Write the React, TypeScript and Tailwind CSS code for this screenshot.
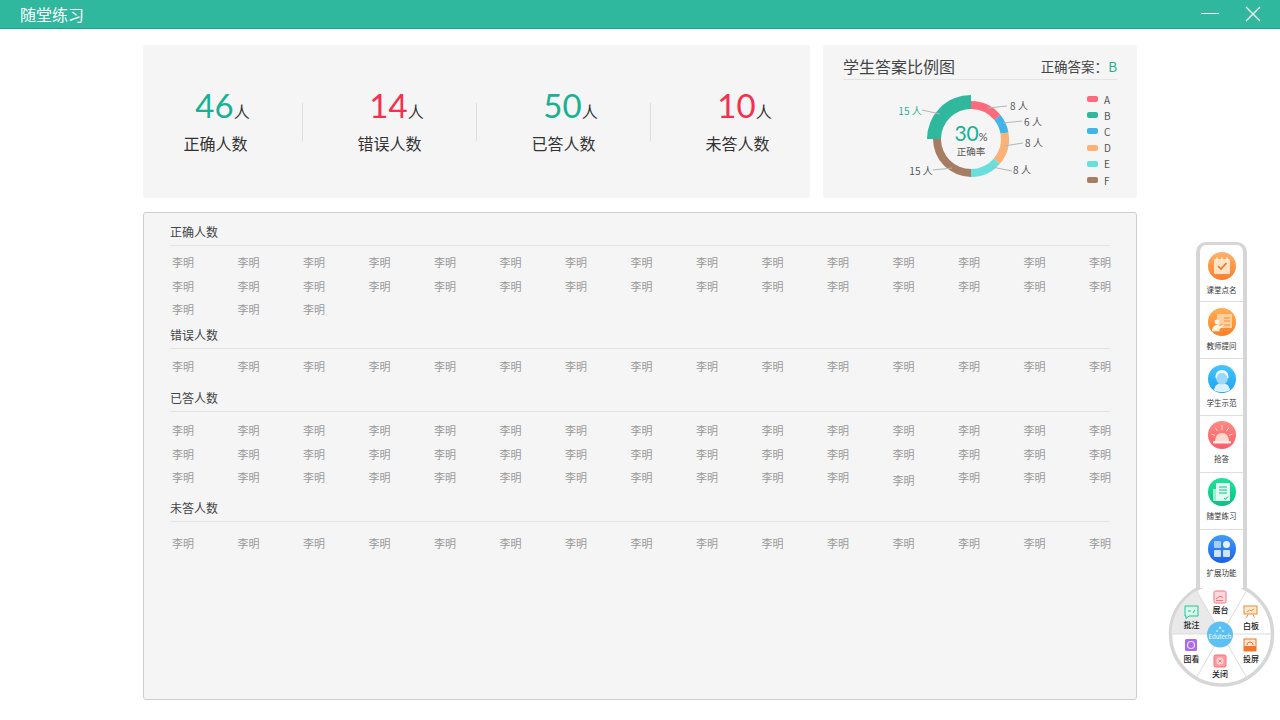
import React from 'react';

const cjk = 'font-["Noto_Sans_CJK_SC","Noto_Sans",sans-serif]';

type Stat = { value: number; label: string; color: string };

const stats: Stat[] = [
  { value: 46, label: '正确人数', color: 'text-[#17b193]' },
  { value: 14, label: '错误人数', color: 'text-[#f5304f]' },
  { value: 50, label: '已答人数', color: 'text-[#17b193]' },
  { value: 10, label: '未答人数', color: 'text-[#f5304f]' },
];

const legend = [
  { name: 'A', color: 'bg-[#fb6b7c]' },
  { name: 'B', color: 'bg-[#2fb89d]' },
  { name: 'C', color: 'bg-[#42b4e8]' },
  { name: 'D', color: 'bg-[#fbb274]' },
  { name: 'E', color: 'bg-[#66dfdd]' },
  { name: 'F', color: 'bg-[#a67c62]' },
];

// donut slice between two radii, angles in degrees clockwise from 12 o'clock
function slice(cx: number, cy: number, r0: number, r1: number, a0: number, a1: number) {
  const pt = (r: number, a: number) => {
    const t = (a * Math.PI) / 180;
    return `${cx + r * Math.sin(t)} ${cy - r * Math.cos(t)}`;
  };
  const large = a1 - a0 > 180 ? 1 : 0;
  return `M${pt(r1, a0)} A${r1} ${r1} 0 ${large} 1 ${pt(r1, a1)} L${pt(r0, a1)} A${r0} ${r0} 0 ${large} 0 ${pt(r0, a0)} Z`;
}

const Donut = () => {
  const cx = 971;
  const cy = 139;
  const labels = [
    { t: '8 人', x: 1019, y: 106, line: '988,108 1007,106', c: '#555' },
    { t: '6 人', x: 1033, y: 122, line: '1003,123 1022,121', c: '#555' },
    { t: '8 人', x: 1034, y: 143, line: '1004,146 1023,143', c: '#555' },
    { t: '8 人', x: 1022, y: 170, line: '992,167 1012,171', c: '#555' },
    { t: '15 人', x: 910, y: 111, line: '922,110 940,114', c: '#1cb394' },
    { t: '15 人', x: 921, y: 171, line: '933,170 952,168', c: '#555' },
  ];
  return (
    <svg width="170" height="105" viewBox="890 85 170 105" className="ml-[47px] mt-[5px] shrink-0">
      <path d={slice(cx, cy, 30, 38, 0, 51)} fill="#fb6b7c" />
      <path d={slice(cx, cy, 30, 38, 51, 80)} fill="#42b4e8" />
      <path d={slice(cx, cy, 30, 38, 80, 131)} fill="#fbb274" />
      <path d={slice(cx, cy, 30, 38, 131, 180)} fill="#66dfdd" />
      <path d={slice(cx, cy, 30, 38, 180, 270)} fill="#a67c62" />
      <path d={slice(cx, cy, 30, 44, 270, 360)} fill="#2fb89d" />
      {labels.map((l) => (
        <g key={l.t + l.x}>
          <polyline points={l.line} fill="none" stroke="#b5b5b5" strokeWidth="1" />
          <text x={l.x} y={l.y + 3.5} textAnchor="middle" fontSize="10" fill={l.c}>
            {l.t}
          </text>
        </g>
      ))}
      <text x={cx} y={140.500} textAnchor="middle" fill="#17b193" fontSize="21" fontFamily="Lato, sans-serif">
        30<tspan fontSize="11" fill="#555">%</tspan>
      </text>
      <text x={cx} y={154.500} textAnchor="middle" fill="#555" fontSize="9.5">
        正确率
      </text>
    </svg>
  );
};

const NameGrid = ({ count, odd, top }: { count: number; odd?: number; top: string }) => (
  <div className={`grid grid-cols-[repeat(15,65.5px)] auto-rows-[23.5px] pl-[2px] ${top}`}>
    {Array.from({ length: count }).map((_, i) => (
      <span key={i} className={`text-[11px] leading-[23.5px] text-[#9a9a9a] ${i === odd ? 'mt-[3px]' : ''}`}>
        李明
      </span>
    ))}
  </div>
);

type SectionProps = { title: string; count: number; odd?: number; className: string; top: string };

const Section = ({ title, count, odd, className, top }: SectionProps) => (
  <div className={className}>
    <div className="h-[22px] border-b border-[#e3e3e3] text-[12px] leading-[15px] text-[#444]">{title}</div>
    <NameGrid count={count} odd={odd} top={top} />
  </div>
);

const railIcons = {
  roll: (
    <>
      <rect x="6" y="7" width="16" height="15" rx="1" fill="#ffe3c4" />
      <path d="M9 5.500v3M14 5.500v3M19 5.500v3" stroke="#fff" strokeWidth="1.200" />
      <path d="M10 14l3 3 5.500-6" fill="none" stroke="#f0762a" strokeWidth="1.700" />
    </>
  ),
  ask: (
    <>
      <rect x="9" y="6" width="15" height="14" fill="#ffcf9e" />
      <path d="M16 10h6M16 13h6M12 17h10" stroke="#f48a33" strokeWidth="1" />
      <circle cx="9" cy="14" r="2.400" fill="#fff4e2" />
      <path d="M4 23c0-3 2-6 5-6 1.500 0 2.500.6 3 1.500l4-2.500.5.8-5 4.500v2H4z" fill="#fff4e2" />
    </>
  ),
  demo: (
    <>
      <path d="M6 25c1-5 4-7 8-7s7 2 8 7c-2 2.800-14 2.800-16 0z" fill="#d8f2ff" />
      <ellipse cx="14" cy="12.500" rx="6" ry="7" fill="#9ad9fb" />
      <path d="M7.500 13c-.5-5 2.500-8 6.500-8s7 3 6.500 8l-1.500 0c0-3-2-5-5-5s-5 2-5 5z" fill="#e8f8ff" />
    </>
  ),
  race: (
    <>
      <path d="M7 21c0-6 3-9 7-9s7 3 7 9z" fill="#ffd9cf" />
      <rect x="5" y="20" width="18" height="2.500" rx="1" fill="#fff0ea" />
      <path d="M14 4v5M7 6.500l2.500 3.500M21 6.500l-2.500 3.500M3.500 13l3.500 1.500M24.500 13l-3.500 1.500" stroke="#ffd9cf" strokeWidth="1" />
    </>
  ),
  practice: (
    <>
      <rect x="5" y="11" width="4" height="12" fill="#9df0cf" />
      <rect x="8" y="5" width="14" height="18" fill="#dffaf0" />
      <path d="M11 9h8M11 12h8M11 15h8" stroke="#12c088" strokeWidth="1.200" />
      <path d="M16 20l1.500 1.300L20 18.500" fill="none" stroke="#12c088" strokeWidth="1" />
    </>
  ),
  more: (
    <>
      <rect x="6" y="6" width="7" height="7" rx="1" fill="#a9cdfb" />
      <rect x="15" y="6" width="7" height="7" rx="3.500" fill="#e6f1ff" />
      <rect x="6" y="15" width="7" height="7" rx="1" fill="#cfe3ff" />
      <rect x="15" y="15" width="7" height="7" rx="1" fill="#cfe3ff" />
    </>
  ),
};

const railItems = [
  { key: 'roll', label: '课堂点名', box: 'h-[57px] pt-[7px] border-b', from: '#ffb36b', to: '#fb7d2c', art: railIcons.roll },
  { key: 'ask', label: '教师提问', box: 'h-[57px] pt-[6px] border-b', from: '#ffb057', to: '#fb7f26', art: railIcons.ask },
  { key: 'demo', label: '学生示范', box: 'h-[57px] pt-[6px] border-b', from: '#45c6fb', to: '#1e9ff0', art: railIcons.demo },
  { key: 'race', label: '抢答', box: 'h-[57px] pt-[5px] border-b', from: '#ff8a80', to: '#fb5c6c', art: railIcons.race },
  { key: 'practice', label: '随堂练习', box: 'h-[57px] pt-[5px] border-b', from: '#1fe39a', to: '#0bbf83', art: railIcons.practice },
  { key: 'more', label: '扩展功能', box: 'h-[57px] pt-[5px]', from: '#3f9bfb', to: '#1c62e4', art: railIcons.more },
];

const Rail = () => (
  <div className="absolute left-[1196px] top-[242px] z-10 h-[346px] w-[51px] rounded-t-[10px] border-x-4 border-t-[3px] border-[#d6d6d6] bg-white">
    {railItems.map((item) => (
      <div key={item.key} className={`flex flex-col items-center border-[#dedede] ${item.box}`}>
        <svg width="28" height="28" viewBox="0 0 28 28" className="shrink-0">
          <defs>
            <linearGradient id={`rail-${item.key}`} x1="0" y1="0" x2="0" y2="1">
              <stop offset="0" stopColor={item.from} />
              <stop offset="1" stopColor={item.to} />
            </linearGradient>
            <clipPath id={`clip-${item.key}`}>
              <circle cx="14" cy="14" r="14" />
            </clipPath>
          </defs>
          <circle cx="14" cy="14" r="14" fill={`url(#rail-${item.key})`} />
          <g clipPath={`url(#clip-${item.key})`}>{item.art}</g>
        </svg>
        <span className="mt-[5px] whitespace-nowrap text-[7.500px] leading-[10px] text-[#333]">{item.label}</span>
      </div>
    ))}
  </div>
);

const Dial = () => {
  const cx = 1221.5;
  const cy = 634;
  const r = 51;
  const spokes = [30, 90, 150, 210, 270, 330];
  return (
    <svg width="108" height="108" viewBox="1168 580 108 108" className="absolute left-[1168px] top-[580px]">
      <circle cx={cx} cy={cy} r={r} fill="#fff" stroke="#d6d6d6" strokeWidth="3.5" />
      <path d={`M${cx} ${cy} L${cx - r + 1} ${cy} A${r - 1} ${r - 1} 0 0 1 ${cx - (r - 1) * 0.5} ${cy - (r - 1) * 0.866} Z`} fill="#e9e9e9" />
      {spokes.map((a) => {
        const t = (a * Math.PI) / 180;
        return (
          <line
            key={a}
            x1={cx}
            y1={cy}
            x2={cx + (r - 1) * Math.sin(t)}
            y2={cy - (r - 1) * Math.cos(t)}
            stroke="#dcdcdc"
            strokeWidth="1"
          />
        );
      })}

      {/* 展台 */}
      <rect x="1214" y="591" width="12" height="12" rx="1.500" fill="#ffd9dc" stroke="#f4727f" />
      <path d="M1216 599l4-3 3 1.500M1216 600.500h7" fill="none" stroke="#f4727f" strokeWidth="1" />
      {/* 白板 */}
      <rect x="1244" y="606" width="13" height="8" fill="#ffe9d2" stroke="#f0892f" />
      <path d="M1247 612l2.500-2 2 1 2.500-2.500M1248 614.500l-1.500 3M1253 614.500l1.500 3" fill="none" stroke="#f0892f" strokeWidth="1" />
      {/* 投屏 */}
      <rect x="1244" y="639" width="12" height="12" fill="#ffe6cf" stroke="#f0782a" />
      <rect x="1244" y="646" width="12" height="5" fill="#f0782a" />
      <path d="M1247 645a3 3 0 0 1 6 0" fill="none" stroke="#f0782a" strokeWidth="1" />
      {/* 关闭 */}
      <rect x="1214" y="655" width="12" height="12" rx="1.500" fill="#ff9a9f" stroke="#f6737c" />
      <circle cx="1220" cy="661" r="3.500" fill="#ffd9da" />
      <path d="M1218.500 659.500l3 3M1221.500 659.500l-3 3" stroke="#f6737c" strokeWidth="1" />
      {/* 图看 */}
      <rect x="1185" y="639" width="12" height="12" rx="1.500" fill="#a86bf0" />
      <circle cx="1191" cy="645" r="3.500" fill="none" stroke="#ecdcff" strokeWidth="1.200" />
      {/* 批注 */}
      <path d="M1185 606h13v10h-9l-3 2.500V616h-1z" fill="#d6f8ec" stroke="#1fc795" />
      <path d="M1188 611h3M1193 613l2-3" stroke="#1fc795" strokeWidth="1" />

      <g fontSize="8" fill="#222" textAnchor="middle" fontWeight="500">
        <text x="1220.500" y="613">展台</text>
        <text x="1251" y="628.500">白板</text>
        <text x="1251" y="661.500">投屏</text>
        <text x="1220" y="677">关闭</text>
        <text x="1191.500" y="661.500">图看</text>
        <text x="1191.500" y="628">批注</text>
      </g>

      <circle cx="1220" cy="634.500" r="13" fill="#5cc0f2" />
      <path d="M1220 626.500l1.500 2h-3zM1217 630l1.300 1.500h-2.600zM1223 630l1.300 1.500h-2.600z" fill="#fff" />
      <text x="1220" y="639" textAnchor="middle" fontSize="6" fill="#fff">
        Edutech
      </text>
    </svg>
  );
};

export default function App() {
  return (
    <div className={`relative h-[720px] w-[1280px] overflow-hidden bg-white ${cjk}`}>
      {/* title bar */}
      <div className="flex h-[29px] items-center justify-between border-b border-[#11a98a] bg-[#2fb89d] pl-[20px] pr-[19px]">
        <span className="text-[16px] leading-[29px] text-white">随堂练习</span>
        <div className="flex items-center gap-[26px]">
          <svg width="18" height="16" viewBox="0 0 18 16">
            <path d="M0 7.500h18" stroke="#fff" strokeWidth="1" />
          </svg>
          <svg width="16" height="16" viewBox="0 0 16 16">
            <path d="M1 1l14 14M15 1L1 15" stroke="#fff" strokeWidth="1.300" />
          </svg>
        </div>
      </div>

      <div className="ml-[143px] w-[994px] pt-[16px]">
        <div className="flex gap-[13px]">
          <div className="flex h-[153px] w-[667px] items-center justify-center rounded-[3px] bg-[#f5f5f5]">
            {stats.map((s, i) => (
              <React.Fragment key={s.label}>
                {i > 0 && <div className="h-[38px] w-px shrink-0 bg-[#dedede]" />}
                <div className="flex w-[173px] shrink-0 flex-col items-center pb-[5px]">
                  <div className="ml-[14px] flex h-[44px] items-baseline">
                    <span className={`font-["Lato",sans-serif] text-[33px] leading-[44px] ${s.color}`}>{s.value}</span>
                    <span className="text-[16px] text-[#333]">人</span>
                  </div>
                  <span className="mt-[4px] text-[16px] leading-[24px] text-[#333]">{s.label}</span>
                </div>
              </React.Fragment>
            ))}
          </div>

          <div className="h-[153px] w-[314px] rounded-[3px] bg-[#f5f5f5] px-[20px] pt-[10px]">
            <div className="flex h-[25px] items-center justify-between border-b border-[#e3e3e3] pb-[2px]">
              <span className="text-[16px] leading-[22px] text-[#444]">学生答案比例图</span>
              <span className="text-[13.500px] leading-[20px] text-[#444]">
                正确答案：<span className="text-[#1cb394]">B</span>
              </span>
            </div>
            <div className="flex">
              <Donut />
              <div className="ml-[27px] flex flex-col pt-[11px]">
                {legend.map((l) => (
                  <div key={l.name} className="flex h-[16.200px] items-center gap-[6px] text-[10px] text-[#555]">
                    <span className={`h-[6px] w-[11px] rounded-[2px] ${l.color}`} />
                    {l.name}
                  </div>
                ))}
              </div>
            </div>
          </div>
        </div>

        <div className="mt-[14px] h-[488px] rounded-[3px] border border-[#cfcfcf] bg-[#f5f5f5] px-[26px] pt-[11px]">
          <Section title="正确人数" count={33} className="" top="pt-[5.250px]" />
          <Section title="错误人数" count={15} className="mt-[5.250px]" top="pt-[6.250px]" />
          <Section title="已答人数" count={45} odd={41} className="mt-[11.250px]" top="pt-[7.250px]" />
          <Section title="未答人数" count={15} className="mt-[10.250px]" top="pt-[10.250px]" />
        </div>
      </div>

      <Dial />
      <Rail />
    </div>
  );
}
